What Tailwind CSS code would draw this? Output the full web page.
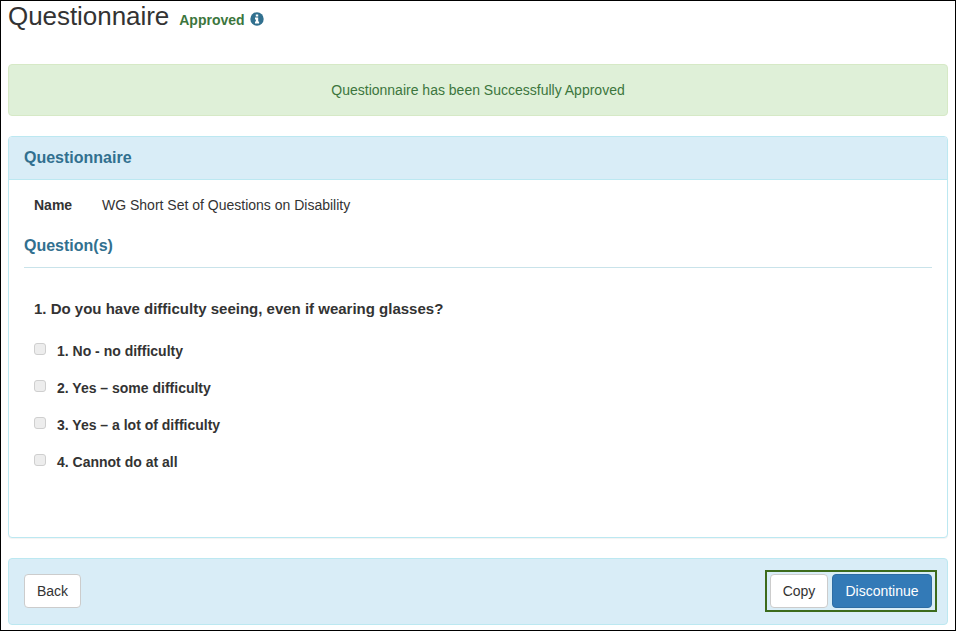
<!DOCTYPE html>
<html>
<head>
<meta charset="utf-8">
<script src="https://cdn.jsdelivr.net/npm/@tailwindcss/browser@4"></script>
</head>
<body class="bg-white">
<div class="h-[631px] w-[956px] border border-black bg-white px-[7px] font-['Liberation_Sans',Arial,sans-serif] text-[14px] leading-[20px] text-[#333] overflow-hidden">
  <div class="flex h-[63px] items-start">
    <h1 class="text-[26px] leading-[30px] tracking-[-0.05px] text-[#333]">Questionnaire</h1>
    <span class="ml-[10px] mt-[9px] text-[14px] font-bold leading-[20px] text-[#3c763d]">Approved</span>
    <svg class="ml-[5px] mt-[11px]" width="14" height="14" viewBox="0 0 14 14"><circle cx="7" cy="7" r="6.7" fill="#31708f"/><path d="M5.8 2.4h2.4v2.1H5.8zM5 5.4h3.2v4.1h.9v2H5v-2h.9V7.4H5z" fill="#fff"/></svg>
  </div>
  <div class="flex h-[52px] items-center justify-center rounded-[4px] border border-[#d6e9c6] bg-[#dff0d8] text-[#3c763d]">Questionnaire has been Successfully Approved</div>
  <div class="mt-[20px] flex h-[402px] flex-col rounded-[4px] border border-[#bce8f1] bg-white shadow-[0_1px_1px_rgba(0,0,0,0.05)]">
    <div class="flex h-[43px] items-center rounded-t-[3px] border-b border-[#bce8f1] bg-[#d9edf7] px-[15px] text-[16px] font-bold text-[#31708f]">Questionnaire</div>
    <div class="flex-1 px-[15px]">
      <div class="flex pl-[10px] pt-[15px]">
        <span class="w-[68px] font-bold">Name</span>
        <span>WG Short Set of Questions on Disability</span>
      </div>
      <h3 class="mt-[21px] border-b border-[#c9e3ea] pb-[11px] text-[16px] font-bold leading-[20px] text-[#31708f]">Question(s)</h3>
      <p class="mt-[31px] pl-[10px] text-[15px] font-bold leading-[20px]">1. Do you have difficulty seeing, even if wearing glasses?</p>
      <div class="mt-[22px] flex flex-col gap-[17px] pl-[10px]">
        <label class="flex h-[20px] items-center font-bold"><span class="mb-[4px] h-[12px] w-[12px] rounded-[3px] border border-[#cfcfcf] bg-[#ededed]"></span><span class="ml-[11px]">1. No - no difficulty</span></label>
        <label class="flex h-[20px] items-center font-bold"><span class="mb-[4px] h-[12px] w-[12px] rounded-[3px] border border-[#cfcfcf] bg-[#ededed]"></span><span class="ml-[11px]">2. Yes – some difficulty</span></label>
        <label class="flex h-[20px] items-center font-bold"><span class="mb-[4px] h-[12px] w-[12px] rounded-[3px] border border-[#cfcfcf] bg-[#ededed]"></span><span class="ml-[11px]">3. Yes – a lot of difficulty</span></label>
        <label class="flex h-[20px] items-center font-bold"><span class="mb-[4px] h-[12px] w-[12px] rounded-[3px] border border-[#cfcfcf] bg-[#ededed]"></span><span class="ml-[11px]">4. Cannot do at all</span></label>
      </div>
    </div>
  </div>
  <div class="mt-[20px] flex h-[67px] items-center justify-between rounded-[4px] border border-[#bce8f1] bg-[#d9edf7] pb-[1px] pl-[15px] pr-[10px]">
    <button class="h-[34px] w-[57px] rounded-[4px] border border-[#ccc] bg-white text-[#333]">Back</button>
    <div class="flex gap-[4px] border-2 border-[#3c6b1c] px-[3px] py-[2px]">
      <button class="h-[34px] w-[58px] rounded-[4px] border border-[#ccc] bg-white text-[#333]">Copy</button>
      <button class="h-[34px] w-[100px] rounded-[4px] border border-[#2e6da4] bg-[#337ab7] text-white">Discontinue</button>
    </div>
  </div>
</div>
</body>
</html>
